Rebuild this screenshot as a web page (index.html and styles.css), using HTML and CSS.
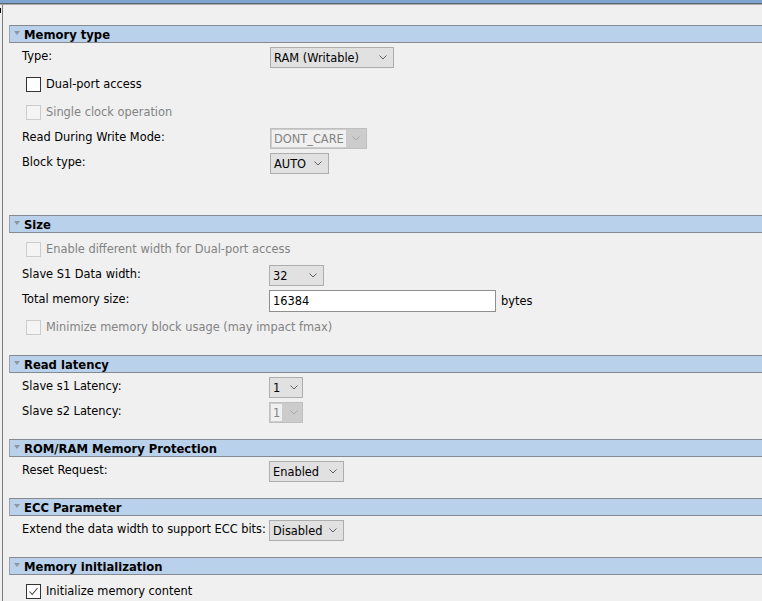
FILE: index.html
```html
<!DOCTYPE html>
<html>
<head>
<meta charset="utf-8">
<link rel="stylesheet" href="styles.css">
</head>
<body>
<div class="topbar"></div>
<div class="topline"></div>
<div class="topline2"></div>
<div class="frame">
  <span class="tick"></span>

  <section class="sec sec-first">
    <div class="hdr"><span class="tri"></span><span class="hdr-title">Memory type</span></div>
    <div class="body body-tall">
      <div class="row row-sel"><span class="label">Type:</span>
        <div class="combo w-ram"><span class="val">RAM (Writable)</span><svg class="chev" viewBox="0 0 8 5"><polyline points="0.5,0.5 4,4 7.5,0.5"/></svg></div>
      </div>
      <div class="row row-chk"><span class="cb"></span><span class="cb-text">Dual-port access</span></div>
      <div class="row row-chk dis"><span class="cb"></span><span class="cb-text">Single clock operation</span></div>
      <div class="row row-sel"><span class="label">Read During Write Mode:</span>
        <div class="combo combo-dis w-dc"><span class="val">DONT_CARE</span><svg class="chev" viewBox="0 0 8 5"><polyline points="0.5,0.5 4,4 7.5,0.5"/></svg></div>
      </div>
      <div class="row row-sel"><span class="label">Block type:</span>
        <div class="combo w-auto"><span class="val">AUTO</span><svg class="chev" viewBox="0 0 8 5"><polyline points="0.5,0.5 4,4 7.5,0.5"/></svg></div>
      </div>
    </div>
  </section>

  <section class="sec">
    <div class="hdr"><span class="tri"></span><span class="hdr-title">Size</span></div>
    <div class="body">
      <div class="row row-chk dis"><span class="cb"></span><span class="cb-text">Enable different width for Dual-port access</span></div>
      <div class="row row-sel"><span class="label">Slave S1 Data width:</span>
        <div class="combo w-32"><span class="val">32</span><svg class="chev" viewBox="0 0 8 5"><polyline points="0.5,0.5 4,4 7.5,0.5"/></svg></div>
      </div>
      <div class="row row-sel"><span class="label">Total memory size:</span>
        <div class="field">16384</div><span class="unit">bytes</span>
      </div>
      <div class="row row-chk dis"><span class="cb"></span><span class="cb-text">Minimize memory block usage (may impact fmax)</span></div>
    </div>
  </section>

  <section class="sec">
    <div class="hdr"><span class="tri"></span><span class="hdr-title">Read latency</span></div>
    <div class="body">
      <div class="row row-sel"><span class="label">Slave s1 Latency:</span>
        <div class="combo w-1"><span class="val">1</span><svg class="chev" viewBox="0 0 8 5"><polyline points="0.5,0.5 4,4 7.5,0.5"/></svg></div>
      </div>
      <div class="row row-sel"><span class="label">Slave s2 Latency:</span>
        <div class="combo combo-dis w-1"><span class="val">1</span><svg class="chev" viewBox="0 0 8 5"><polyline points="0.5,0.5 4,4 7.5,0.5"/></svg></div>
      </div>
    </div>
  </section>

  <section class="sec">
    <div class="hdr"><span class="tri"></span><span class="hdr-title">ROM/RAM Memory Protection</span></div>
    <div class="body">
      <div class="row row-sel"><span class="label">Reset Request:</span>
        <div class="combo w-en"><span class="val">Enabled</span><svg class="chev" viewBox="0 0 8 5"><polyline points="0.5,0.5 4,4 7.5,0.5"/></svg></div>
      </div>
    </div>
  </section>

  <section class="sec">
    <div class="hdr"><span class="tri"></span><span class="hdr-title">ECC Parameter</span></div>
    <div class="body">
      <div class="row row-sel"><span class="label">Extend the data width to support ECC bits:</span>
        <div class="combo w-en"><span class="val">Disabled</span><svg class="chev" viewBox="0 0 8 5"><polyline points="0.5,0.5 4,4 7.5,0.5"/></svg></div>
      </div>
    </div>
  </section>

  <section class="sec">
    <div class="hdr"><span class="tri"></span><span class="hdr-title">Memory initialization</span></div>
    <div class="body">
      <div class="row row-chk"><span class="cb cb-on"><svg viewBox="0 0 13 13"><polyline points="2.5,6.5 5.2,9.5 10.5,3"/></svg></span><span class="cb-text">Initialize memory content</span></div>
    </div>
  </section>
</div>
</body>
</html>
```
FILE: styles.css
```css
html, body {
  margin: 0;
  padding: 0;
  background: #f0f0f0;
  height: 100%;
  overflow: hidden;
}
body {
  font-family: "DejaVu Sans", "Liberation Sans", sans-serif;
  font-size: 11.4px;
  color: #000;
}
.topbar {
  height: 3px;
  background: #7fa4cf;
}
.topline {
  height: 1px;
  background: #5e666f;
}
.topline2 {
  height: 1px;
  background: #a9a9a9;
}
.frame {
  position: relative;
  margin-left: 2px;
  border-left: 1px solid #7c7c7c;
  padding-top: 20px;
  min-height: 700px;
}
.tick {
  position: absolute;
  left: -3px;
  top: 3px;
  width: 1px;
  height: 5px;
  background: #000;
}
.sec {
  display: block;
}
.hdr {
  display: flex;
  align-items: center;
  height: 16px;
  margin-left: 6px;
  background: #b9d1ea;
  border-top: 1px solid #858a90;
  border-bottom: 1px solid #858a90;
  border-left: 1px solid #9aa3ad;
}
.tri {
  width: 0;
  height: 0;
  margin-left: 4px;
  border-left: 3.5px solid transparent;
  border-right: 3.5px solid transparent;
  border-top: 4px solid #8c96a2;
  margin-top: -2px;
}
.hdr-title {
  margin-left: 4px;
  padding-top: 2px;
  font-weight: bold;
  font-size: 11.6px;
}
.body {
  display: flex;
  flex-direction: column;
  gap: 4px;
  padding: 4px 0 16px 19px;
}
.body-tall {
  padding-bottom: 41px;
}
.row {
  display: flex;
  align-items: center;
}
.row-sel {
  height: 21px;
}
.row-chk {
  height: 24px;
  padding-left: 4px;
}
.label {
  width: 247px;
  flex: none;
  margin-top: -3px;
  white-space: nowrap;
}
.sec-first .label {
  width: 248px;
}
.combo {
  box-sizing: border-box;
  height: 21px;
  display: flex;
  align-items: center;
  justify-content: space-between;
  background: #e1e1e1;
  border: 1px solid #adadad;
  padding: 0 6px 0 3px;
}
.val {
  white-space: nowrap;
}
.chev {
  width: 8px;
  height: 5px;
  flex: none;
  fill: none;
  stroke: #606060;
  stroke-width: 1;
}
.combo-dis {
  background: #cccccc;
  border-color: #bfbfbf;
  padding-left: 1px;
}
.combo-dis .val {
  background: #f0f0f0;
  color: #838383;
  align-self: stretch;
  display: flex;
  align-items: center;
  padding: 0 2px;
  margin: 1px 0;
}
.combo-dis .chev {
  stroke: #a8a8a8;
}
.w-ram { width: 124px; }
.w-dc { width: 97px; }
.w-auto { width: 59px; }
.w-32 { width: 55px; }
.w-1 { width: 34px; padding-right: 4px; }
.w-en { width: 75px; }
.field {
  box-sizing: border-box;
  width: 227px;
  height: 22px;
  background: #fff;
  border: 1px solid #8f8f8f;
  display: flex;
  align-items: center;
  padding-left: 3px;
}
.unit {
  margin-left: 5px;
}
.cb {
  box-sizing: border-box;
  width: 15px;
  height: 15px;
  flex: none;
  background: #fff;
  border: 1px solid #333;
  display: flex;
}
.cb svg {
  width: 13px;
  height: 13px;
  fill: none;
  stroke: #404040;
  stroke-width: 1.1;
}
.cb-text {
  margin-left: 5px;
  white-space: nowrap;
}
.dis .cb {
  background: #f4f4f4;
  border-color: #cccccc;
}
.dis .cb-text {
  color: #838383;
}
```
